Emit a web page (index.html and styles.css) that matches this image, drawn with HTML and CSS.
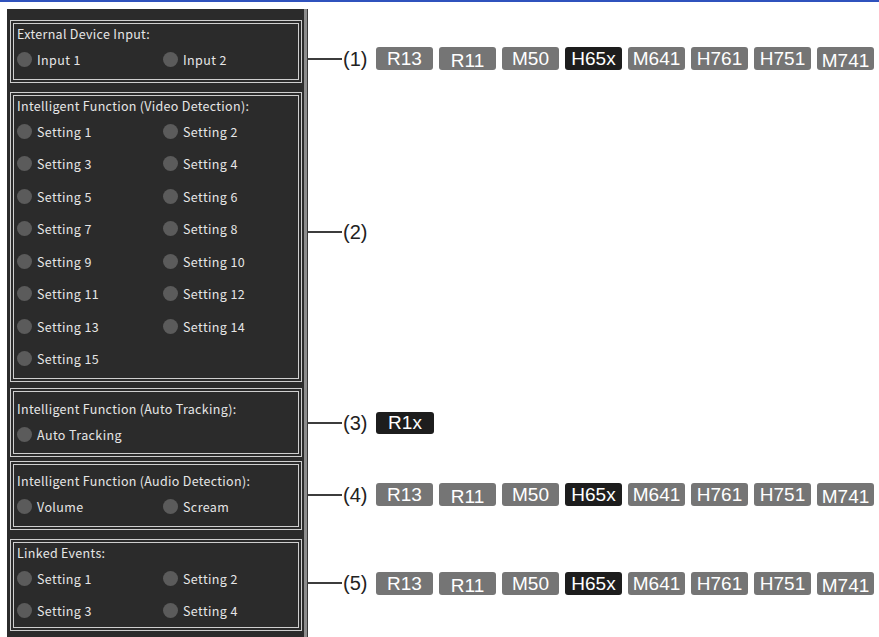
FILE: index.html
```html
<!DOCTYPE html>
<html>
<head>
  <meta content="text/html; charset=UTF-8" http-equiv="content-type" />
  <title>Event Settings</title>
<link rel="stylesheet" href="styles.css">
</head>
<body>
  <div class="topbar"></div>
  <div class="layout">
    <div class="panel"></div>

    <div class="group g1">
      <div class="title">External Device Input:</div>
      <div class="items">
        <div class="item"><span class="dot"></span>Input 1</div>
        <div class="item"><span class="dot"></span>Input 2</div>
      </div>
    </div>
    <div class="callout c1">
      <span class="leader"></span><span class="num">(1)</span>
      <span class="badge">R13</span><span class="badge low">R11</span><span class="badge">M50</span><span class="badge dark">H65x</span><span class="badge">M641</span><span class="badge">H761</span><span class="badge">H751</span><span class="badge low">M741</span>
    </div>

    <div class="group g2">
      <div class="title">Intelligent Function (Video Detection):</div>
      <div class="items">
        <div class="item"><span class="dot"></span>Setting 1</div>
        <div class="item"><span class="dot"></span>Setting 2</div>
        <div class="item"><span class="dot"></span>Setting 3</div>
        <div class="item"><span class="dot"></span>Setting 4</div>
        <div class="item"><span class="dot"></span>Setting 5</div>
        <div class="item"><span class="dot"></span>Setting 6</div>
        <div class="item"><span class="dot"></span>Setting 7</div>
        <div class="item"><span class="dot"></span>Setting 8</div>
        <div class="item"><span class="dot"></span>Setting 9</div>
        <div class="item"><span class="dot"></span>Setting 10</div>
        <div class="item"><span class="dot"></span>Setting 11</div>
        <div class="item"><span class="dot"></span>Setting 12</div>
        <div class="item"><span class="dot"></span>Setting 13</div>
        <div class="item"><span class="dot"></span>Setting 14</div>
        <div class="item"><span class="dot"></span>Setting 15</div>
      </div>
    </div>
    <div class="callout c2">
      <span class="leader"></span><span class="num">(2)</span>
    </div>

    <div class="group g3">
      <div class="title">Intelligent Function (Auto Tracking):</div>
      <div class="items">
        <div class="item"><span class="dot"></span>Auto Tracking</div>
      </div>
    </div>
    <div class="callout c3">
      <span class="leader"></span><span class="num">(3)</span>
      <span class="badge dark wide">R1x</span>
    </div>

    <div class="group g4">
      <div class="title">Intelligent Function (Audio Detection):</div>
      <div class="items">
        <div class="item"><span class="dot"></span>Volume</div>
        <div class="item"><span class="dot"></span>Scream</div>
      </div>
    </div>
    <div class="callout c4">
      <span class="leader"></span><span class="num">(4)</span>
      <span class="badge">R13</span><span class="badge low">R11</span><span class="badge">M50</span><span class="badge dark">H65x</span><span class="badge">M641</span><span class="badge">H761</span><span class="badge">H751</span><span class="badge low">M741</span>
    </div>

    <div class="group g5">
      <div class="title">Linked Events:</div>
      <div class="items">
        <div class="item"><span class="dot"></span>Setting 1</div>
        <div class="item"><span class="dot"></span>Setting 2</div>
        <div class="item"><span class="dot"></span>Setting 3</div>
        <div class="item"><span class="dot"></span>Setting 4</div>
      </div>
    </div>
    <div class="callout c5">
      <span class="leader"></span><span class="num">(5)</span>
      <span class="badge">R13</span><span class="badge low">R11</span><span class="badge">M50</span><span class="badge dark">H65x</span><span class="badge">M641</span><span class="badge">H761</span><span class="badge">H751</span><span class="badge low">M741</span>
    </div>
  </div>
</body>
</html>
```

FILE: styles.css
```css
body {
  margin: 0;
  background: #ffffff;
  font-family: "Liberation Sans", Arial, sans-serif;
}
.topbar {
  height: 2px;
  background: #2f52bd;
}
.layout {
  display: grid;
  grid-template-columns: 300px 1fr;
  margin: 7px 0 0 7px;
}
/* dark panel behind all groups */
.panel {
  grid-column: 1;
  grid-row: 1 / 6;
  background: #2b2b2b;
  border-right: 3px solid #8c8c8c;
  box-shadow: 1px 0 0 #3a3a3a;
}
.group {
  grid-column: 1;
  margin: 0 5px 0 3px;
  border: 4px double #cfcfcf;
  padding: 2px 0 2px 3px;
  font-family: "Noto Sans CJK JP", "DejaVu Sans", sans-serif;
  font-size: 12.5px;
  color: #e6e6e6;
}
.g1 { grid-row: 1; margin-top: 11px; padding-bottom: 2.5px; }
.g2 { grid-row: 2; margin-top: 9px; padding-bottom: 2.5px; }
.g3 { grid-row: 3; margin-top: 6px; padding-top: 9px; padding-bottom: 2px; }
.g4 { grid-row: 4; margin-top: 4px; padding-top: 8px; padding-bottom: 3px; }
.g5 { grid-row: 5; margin-top: 9px; margin-bottom: 6px; padding-bottom: 0; }
.title {
  height: 16px;
  line-height: 16px;
  white-space: nowrap;
  letter-spacing: 0.3px;
}
.items {
  display: grid;
  grid-template-columns: 146px 1fr;
  grid-auto-rows: 32.5px;
  margin-top: 1.5px;
}
.item {
  display: flex;
  align-items: center;
  gap: 5px;
  white-space: nowrap;
  letter-spacing: 0.4px;
}
.dot {
  width: 15px;
  height: 15px;
  border-radius: 50%;
  background: #5b5b5b;
}
/* callouts right of the panel */
.callout {
  grid-column: 2;
  align-self: center;
  display: flex;
  align-items: center;
  gap: 6px;
}
.c1 { grid-row: 1; margin-top: 26px; }
.c2 { grid-row: 2; }
.c3 { grid-row: 3; margin-top: 7px; }
.c4 { grid-row: 4; margin-top: 3px; }
.c5 { grid-row: 5; }
.leader {
  width: 35px;
  height: 2px;
  background: #3c3c3c;
}
.num {
  width: 27px;
  margin-left: -5px;
  font-size: 20px;
  color: #222222;
  line-height: 24px;
}
.badge {
  box-sizing: border-box;
  min-width: 57px;
  height: 23px;
  padding: 0 4px;
  border-radius: 3px;
  background: #757575;
  color: #ffffff;
  font-size: 19px;
  line-height: 23px;
  text-align: center;
}
.badge.low {
  line-height: 27px;
  overflow: hidden;
}
.badge.dark {
  background: #1d1d1d;
}
.badge.wide {
  min-width: 58px;
  height: 22px;
  line-height: 22px;
}
```
